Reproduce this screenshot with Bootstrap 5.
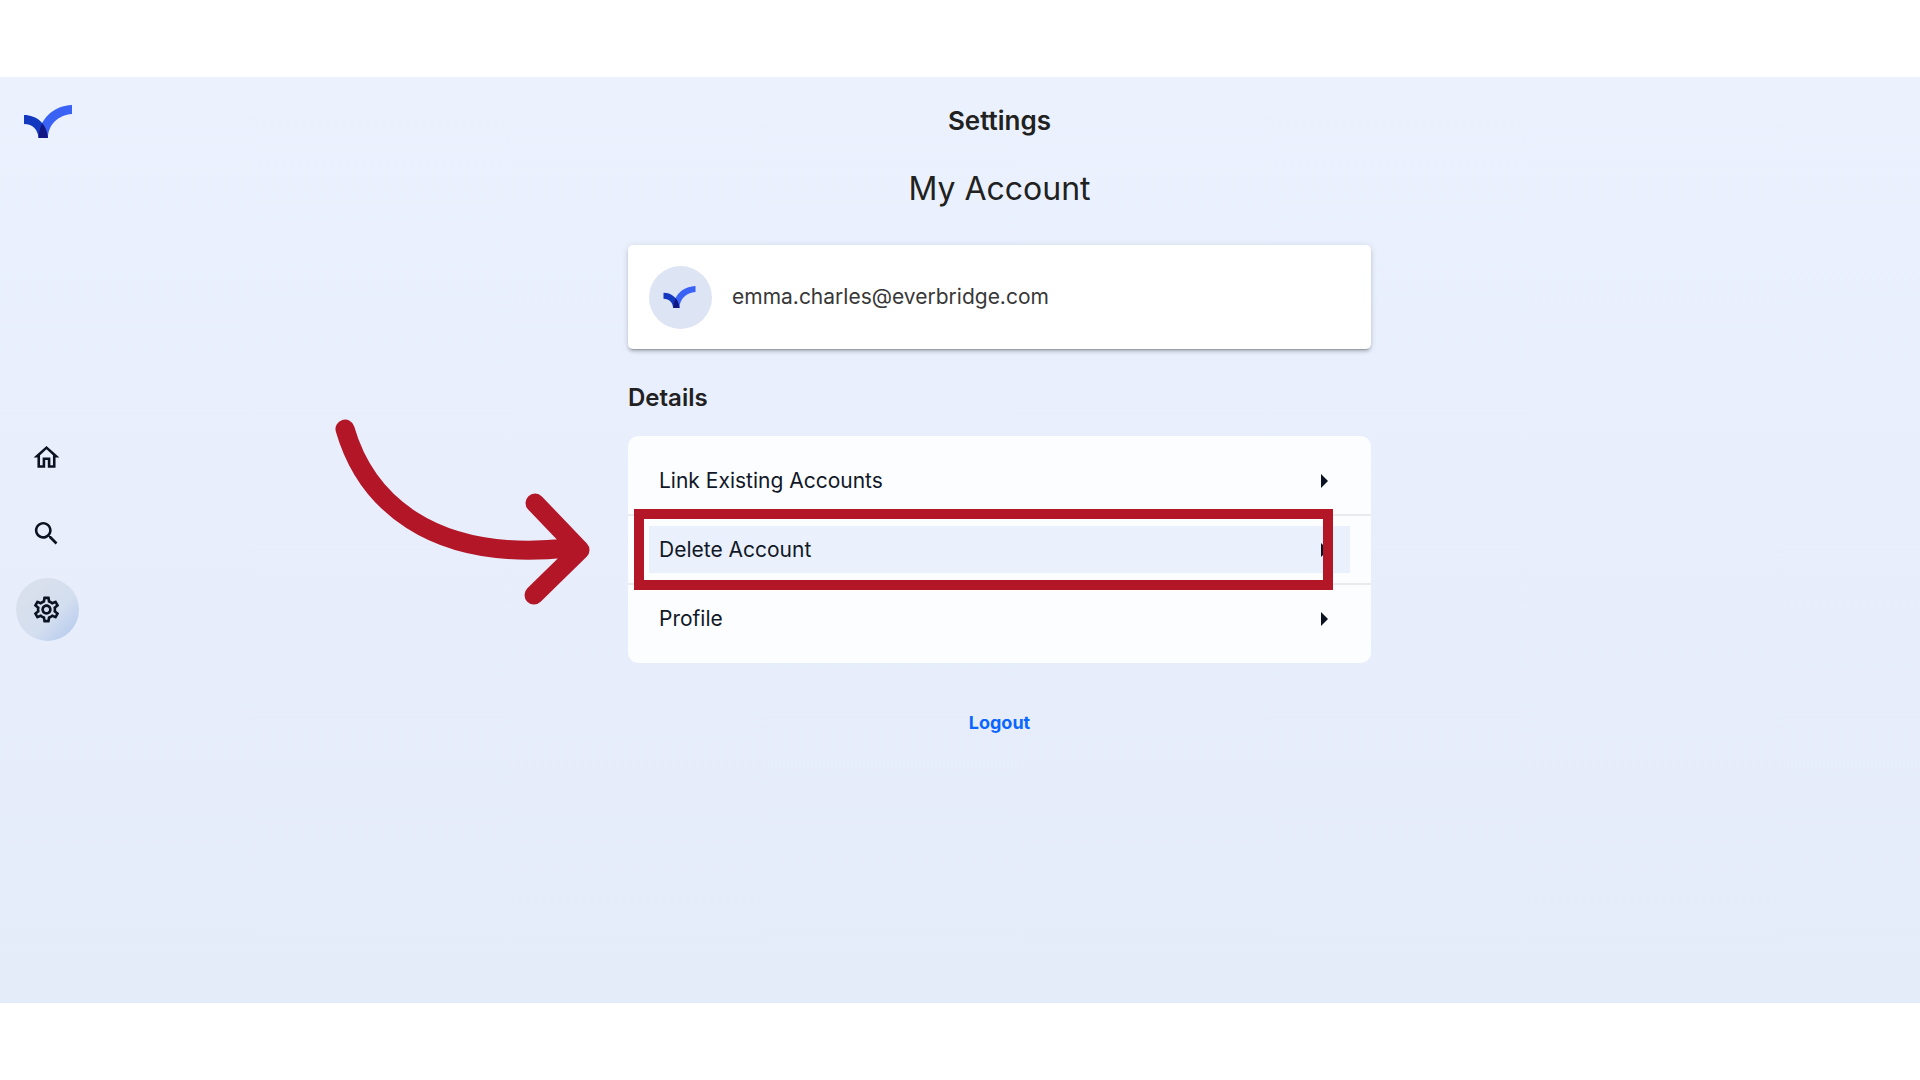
<!DOCTYPE html>
<html lang="en">
<head>
<meta charset="utf-8">
<meta name="viewport" content="width=device-width, initial-scale=1">
<title>Settings</title>
<link href="https://cdn.jsdelivr.net/npm/bootstrap@5.3.0/dist/css/bootstrap.min.css" rel="stylesheet">
<style>
  body { font-family: Inter, "Liberation Sans", sans-serif; background: #fff; color: #212121; }
  .app-shell { margin: 77px 0; min-height: calc(100vh - 154px); background: linear-gradient(#ebf2fe, #e8eefc 45%, #e5ecf9); }
  .side-rail { width: 79px; padding: 28px 0 74px; }
  .brand-link { margin-left: 24px; }
  .rail-list { gap: 13px; margin-left: 16px; }
  .rail-link { width: 63px; height: 63px; padding-right: 2px; color: #0b1222; }
  .rail-link svg { width: 31px; height: 31px; fill: currentColor; }
  .rail-link.active { background: linear-gradient(135deg, #d9e0ed 20%, #d3deef 60%, #b4c9ee 95%); }
  .page-main { padding: 26px 24px 32px; }
  .page-column { width: 100%; max-width: 743px; }
  .page-title { font-size: 26px; line-height: 36px; font-weight: 600; margin-bottom: 30px; }
  .page-subtitle { font-size: 32px; line-height: 40px; font-weight: 400; margin-bottom: 36px; }
  .profile-card { min-height: 104px; padding: 20px 21px; gap: 20px; border-radius: 5px; background: #fff; color: #383838;
    box-shadow: 0 4px 1px -3px rgba(0,0,0,.2), 0 3px 3px rgba(0,0,0,.14), 0 1px 7px rgba(0,0,0,.12); font-size: 21px; }
  .avatar-disc { width: 63px; height: 63px; padding-right: 2px; background: #dde4f3; }
  .section-title { font-size: 24px; line-height: 32px; font-weight: 600; margin: 33px 0 22px; }
  .option-list { background: rgba(255,255,255,.86); border-radius: 10px; padding: 11px 0; }
  .option-item { padding: 10px 21px; }
  .option-item + .option-item { border-top: 2px solid #e9eaed; }
  .option-link { height: 47px; padding: 0 22px 0 10px; font-size: 21px; color: #111827; }
  .option-link.current { background: #eaf0fc; }
  .option-link svg { fill: #0b1222; }
  .callout-frame { left: 6px; right: 38px; top: -7px; bottom: -7px; border: 10px solid #b31727; pointer-events: none; }
  .callout-arrow { left: -300px; top: -101px; pointer-events: none; }
  .logout-btn { margin-top: 39px; height: 40px; font-size: 18px; font-weight: 700; color: #0a66ff; }
</style>
<script src="https://cdn.jsdelivr.net/npm/bootstrap@5.3.0/dist/js/bootstrap.bundle.min.js"></script>
</head>
<body>
<svg class="position-absolute" width="0" height="0" aria-hidden="true">
  <defs>
    <clipPath id="right-wing"><path d="M48 0v9C34 10 24 20 24 33h-9.500C15 15 28 1 48 0z"/></clipPath>
    <symbol id="brand-mark" viewBox="0 0 48 33">
      <path fill="#1238c0" d="M0 10c13 0 23 9 24 23h-9.500C14 25 9 19 0 19z"/>
      <path fill="#3a63f6" d="M48 0v9C34 10 24 20 24 33h-9.500C15 15 28 1 48 0z"/>
      <path fill="#121680" clip-path="url(#right-wing)" d="M0 10c13 0 23 9 24 23h-9.500C14 25 9 19 0 19z"/>
    </symbol>
    <symbol id="caret" viewBox="0 0 7 14"><path d="M0 0l7 7-7 7z"/></symbol>
  </defs>
</svg>

<div class="app-shell d-flex">
  <aside class="side-rail d-flex flex-column flex-shrink-0">
    <a class="brand-link d-flex" href="#" aria-label="Start page"><svg width="48" height="33"><use href="#brand-mark"/></svg></a>
    <nav class="my-auto" aria-label="Main">
      <ul class="rail-list list-unstyled d-flex flex-column mb-0">
        <li><a class="rail-link rounded-circle d-flex align-items-center justify-content-center" href="#" aria-label="Home">
          <svg viewBox="0 0 24 24"><path d="M12 5.690l5 4.500V18h-2v-6H9v6H7v-7.810l5-4.500M12 3L2 12h3v8h6v-6h2v6h6v-8h3L12 3z"/></svg></a></li>
        <li><a class="rail-link rounded-circle d-flex align-items-center justify-content-center" href="#" aria-label="Search">
          <svg viewBox="0 0 24 24"><path d="M15.500 14h-.79l-.28-.27C15.410 12.590 16 11.110 16 9.500 16 5.910 13.090 3 9.500 3S3 5.910 3 9.500 5.910 16 9.500 16c1.610 0 3.090-.59 4.230-1.570l.27.28v.79l5 4.990L20.490 19l-4.990-5zm-6 0C7.010 14 5 11.990 5 9.500S7.010 5 9.500 5 14 7.010 14 9.500 11.990 14 9.500 14z"/></svg></a></li>
        <li><a class="rail-link active rounded-circle d-flex align-items-center justify-content-center" href="#" aria-label="Settings" aria-current="page">
          <svg viewBox="0 0 24 24"><path d="M19.430 12.980c.04-.32.07-.64.07-.98 0-.34-.03-.66-.07-.98l2.110-1.650c.19-.15.24-.42.12-.64l-2-3.460c-.09-.16-.26-.25-.44-.25-.06 0-.12.01-.17.03l-2.490 1c-.52-.4-1.080-.73-1.690-.98l-.38-2.650C14.460 2.180 14.250 2 14 2h-4c-.25 0-.46.18-.49.42l-.38 2.650c-.61.25-1.170.59-1.690.98l-2.490-1c-.06-.02-.12-.03-.18-.03-.17 0-.34.09-.43.25l-2 3.460c-.13.22-.07.49.12.64l2.110 1.650c-.04.32-.07.65-.07.98 0 .33.03.66.07.98l-2.110 1.650c-.19.15-.24.42-.12.64l2 3.460c.09.16.26.25.44.25.06 0 .12-.01.17-.03l2.490-1c.52.4 1.080.73 1.690.98l.38 2.650c.03.24.24.42.49.42h4c.25 0 .46-.18.49-.42l.38-2.650c.61-.25 1.170-.59 1.690-.98l2.490 1c.06.02.12.03.18.03.17 0 .34-.09.43-.25l2-3.460c.12-.22.07-.49-.12-.64l-2.110-1.650zm-1.980-1.710c.04.31.05.52.05.73 0 .21-.02.43-.05.73l-.14 1.130.89.7 1.080.84-.7 1.210-1.270-.51-1.040-.42-.9.68c-.43.32-.84.56-1.250.73l-1.060.43-.16 1.130-.2 1.350h-1.400l-.19-1.350-.16-1.130-1.060-.43c-.43-.18-.83-.41-1.230-.71l-.91-.7-1.060.43-1.270.51-.7-1.210 1.080-.84.89-.7-.14-1.130c-.03-.31-.05-.54-.05-.74s.02-.43.05-.73l.14-1.130-.89-.7-1.080-.84.7-1.210 1.270.51 1.040.42.9-.68c.43-.32.84-.56 1.250-.73l1.060-.43.16-1.130.2-1.350h1.390l.19 1.350.16 1.130 1.060.43c.43.18.83.41 1.230.71l.91.7 1.060-.43 1.270-.51.7 1.210-1.070.85-.89.7.14 1.130zM12 8c-2.210 0-4 1.790-4 4s1.790 4 4 4 4-1.790 4-4-1.790-4-4-4zm0 6c-1.100 0-2-.9-2-2s.9-2 2-2 2 .9 2 2-.9 2-2 2z"/></svg></a></li>
      </ul>
    </nav>
  </aside>

  <main class="page-main flex-grow-1 d-flex justify-content-center">
    <div class="page-column d-flex flex-column">
      <h1 class="page-title text-center">Settings</h1>
      <h2 class="page-subtitle text-center">My Account</h2>

      <section class="profile-card d-flex align-items-center" aria-label="Profile">
        <span class="avatar-disc rounded-circle d-flex align-items-center justify-content-center flex-shrink-0">
          <svg width="33" height="22"><use href="#brand-mark"/></svg>
        </span>
        <span>emma.charles@everbridge.com</span>
      </section>

      <h2 class="section-title">Details</h2>
      <ul class="option-list list-unstyled mb-0">
        <li class="option-item"><a class="option-link d-flex align-items-center justify-content-between text-decoration-none" href="#">Link Existing Accounts<svg width="7" height="14" aria-hidden="true"><use href="#caret"/></svg></a></li>
        <li class="option-item position-relative">
          <a class="option-link current d-flex align-items-center justify-content-between text-decoration-none" href="#">Delete Account<svg width="7" height="14" aria-hidden="true"><use href="#caret"/></svg></a>
          <span class="callout-frame position-absolute"></span>
          <svg class="callout-arrow position-absolute" width="270" height="190" viewBox="0 0 270 190" fill="none" stroke="#b31727" stroke-width="19" stroke-linecap="round" stroke-linejoin="round" aria-hidden="true">
            <path d="M17 14C37 83 100 148 240 133M207 88l45 47-46 45"/>
          </svg>
        </li>
        <li class="option-item"><a class="option-link d-flex align-items-center justify-content-between text-decoration-none" href="#">Profile<svg width="7" height="14" aria-hidden="true"><use href="#caret"/></svg></a></li>
      </ul>

      <button type="button" class="logout-btn btn border-0 align-self-center py-0">Logout</button>
    </div>
  </main>
</div>
</body>
</html>
